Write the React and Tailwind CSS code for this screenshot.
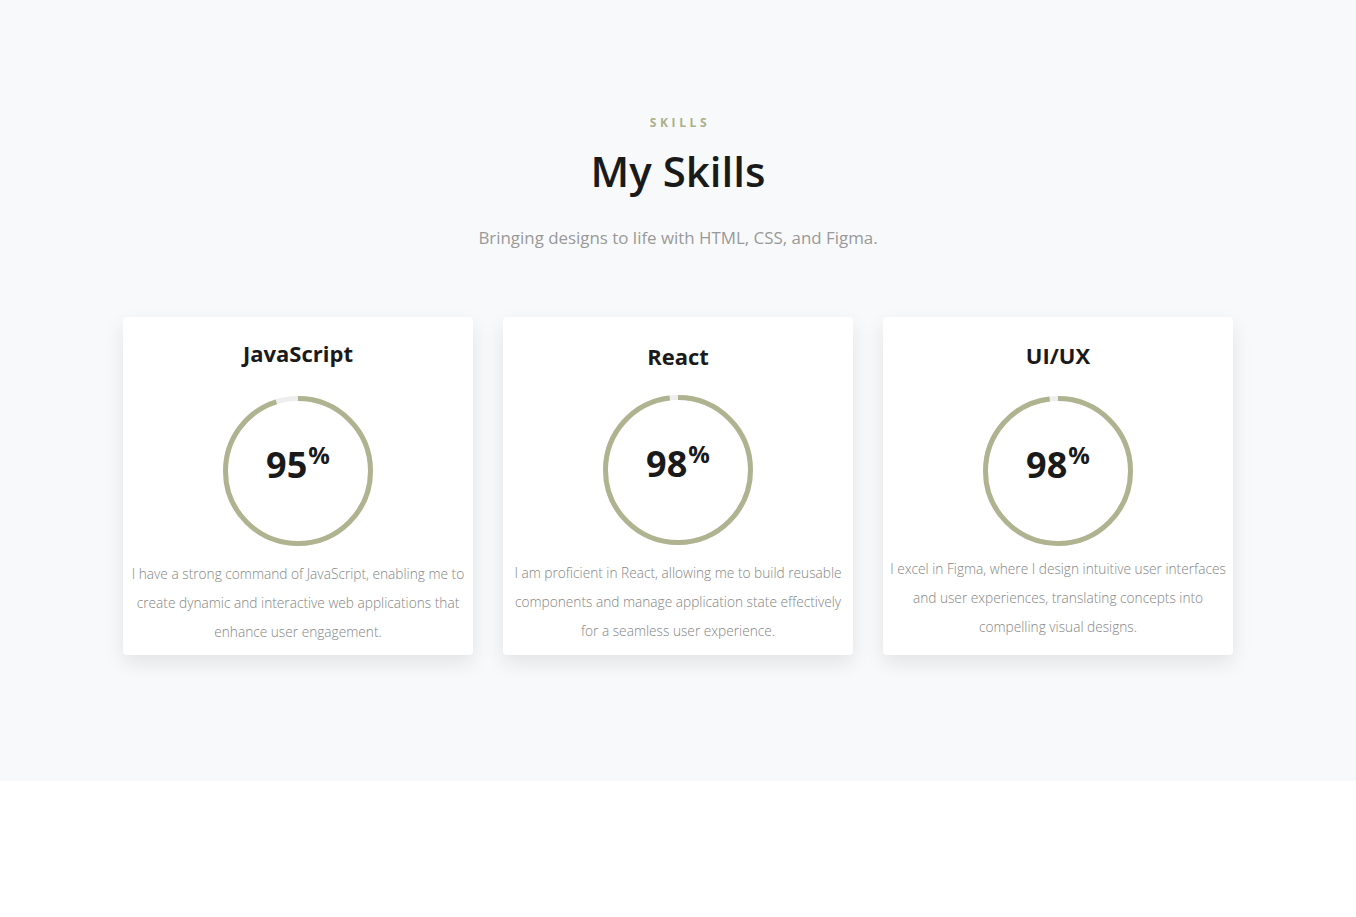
const skills = [
  {
    title: "JavaScript",
    value: 95,
    titleCls: "mt-0",
    ringCls: "mt-[28px]",
    textCls: "mt-[13px]",
    text: "I have a strong command of JavaScript, enabling me to create dynamic and interactive web applications that enhance user engagement.",
  },
  {
    title: "React",
    value: 98,
    titleCls: "mt-[3px]",
    ringCls: "mt-[24px]",
    textCls: "mt-[13px]",
    text: "I am proficient in React, allowing me to build reusable components and manage application state effectively for a seamless user experience.",
  },
  {
    title: "UI/UX",
    value: 98,
    titleCls: "mt-[2px]",
    ringCls: "mt-[26px]",
    textCls: "mt-[8px]",
    text: "I excel in Figma, where I design intuitive user interfaces and user experiences, translating concepts into compelling visual designs.",
  },
];

function Ring({ value }) {
  const r = 72.5;
  const c = 2 * Math.PI * r;
  return (
    <div className="relative w-[150px] h-[150px]">
      <svg width="150" height="150" viewBox="0 0 150 150" className="-rotate-90">
        <circle cx="75" cy="75" r={r} fill="none" stroke="#eeeeee" strokeWidth="5" />
        <circle
          cx="75"
          cy="75"
          r={r}
          fill="none"
          stroke="#afb38f"
          strokeWidth="5"
          strokeDasharray={`${(c * value) / 100} ${c}`}
        />
      </svg>
      {/* value */}
      <div className="absolute inset-0 flex items-center justify-center pb-[13px]">
        <div className="flex items-start text-[#1a1a1a] font-bold leading-none">
          <span className="text-[36px]">{value}</span>
          <span className="text-[24px] -mt-[4px] ml-[1px]">%</span>
        </div>
      </div>
    </div>
  );
}

export default function App() {
  return (
    <div className="font-['Open_Sans',sans-serif] bg-white min-h-[917px]">
      <section className="bg-[#f8f9fa] h-[781px] pt-[114px]">
        {/* HEADER */}
        <div className="text-center">
          <p className="text-[12px] font-bold tracking-[0.3em] text-[#aab08a] leading-[18px] pl-[4px]">SKILLS</p>
          <h2 className="text-[42px] font-semibold text-[#1a1a1a] leading-[50px] mt-[14px]">My Skills</h2>
          <p className="text-[16.9px] text-[#999999] mt-[30px] leading-[24px]">
            Bringing designs to life with HTML, CSS, and Figma.
          </p>
        </div>

        {/* CARDS */}
        <div className="flex justify-center gap-[30px] mt-[67px]">
          {skills.map((s) => (
            <div
              key={s.title}
              className="w-[350px] h-[338px] bg-white rounded-[4px] shadow-[0_8px_20px_rgba(0,0,0,0.09)] px-[6px] pt-[21px] flex flex-col items-center"
            >
              <h3 className={`text-[22px] font-bold text-[#1a1a1a] leading-[30px] ${s.titleCls}`}>{s.title}</h3>
              <div className={s.ringCls}>
                <Ring value={s.value} />
              </div>
              <p className={`text-[13.7px] font-light text-[#858585] leading-[29px] text-center ${s.textCls}`}>
                {s.text}
              </p>
            </div>
          ))}
        </div>
      </section>
    </div>
  );
}
